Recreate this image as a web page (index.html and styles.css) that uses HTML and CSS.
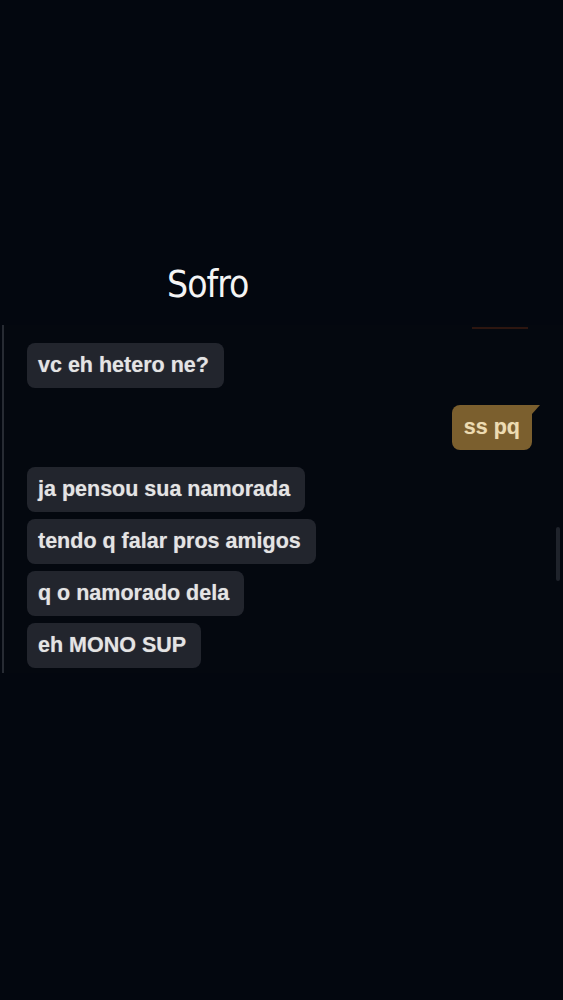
FILE: index.html
```html
<!DOCTYPE html>
<html lang="pt">
<head>
  <meta charset="UTF-8">
  <meta name="viewport" content="width=device-width, initial-scale=1.0">
  <title>Sofro</title>
  <link rel="stylesheet" href="styles.css">
</head>
<body>
  <div class="story">
    <div class="caption">Sofro</div>

    <div class="shot">
      <div class="shot_top"><span class="top_line"></span></div>

      <div class="group">
        <div class="msg in"><span class="bubble">vc eh hetero ne?</span></div>
      </div>

      <div class="group">
        <div class="msg out"><span class="bubble">ss pq</span></div>
      </div>

      <div class="group">
        <div class="msg in"><span class="bubble">ja pensou sua namorada</span></div>
        <div class="msg in"><span class="bubble">tendo q falar pros amigos</span></div>
        <div class="msg in"><span class="bubble">q o namorado dela</span></div>
        <div class="msg in"><span class="bubble">eh MONO SUP</span></div>
      </div>

      <span class="scroll"></span>
    </div>
  </div>
</body>
</html>
```

FILE: styles.css
```css
body {
  margin: 0;
  background: #03070f;
  min-height: 1000px;
}

.story {
  width: 563px;
  height: 1000px;
  overflow: hidden;
}

.caption {
  margin-top: 265px;
  padding-left: 167px;
  height: 40px;
  line-height: 40px;
  font-family: 'DejaVu Sans Condensed', 'DejaVu Sans', sans-serif;
  font-stretch: condensed;
  font-size: 37px;
  font-weight: 400;
  letter-spacing: -1px;
  color: #f4f4f4;
}

.shot {
  position: relative;
  margin-top: 20px;
  margin-left: 2px;
  border-left: 2px solid #272b33;
  background: #04080f;
  padding: 2px 23px 5px 23px;
  display: flex;
  flex-direction: column;
  gap: 17px;
  font-family: 'Liberation Sans', Arial, sans-serif;
}

.shot_top {
  display: flex;
  justify-content: flex-end;
  padding-right: 12px;
  margin-bottom: -3px;
}
.top_line {
  width: 56px;
  height: 2px;
  background: #2d1610;
}

.group {
  display: flex;
  flex-direction: column;
  gap: 7px;
}

.msg {display: flex;}
.msg.out {justify-content: flex-end; padding-right: 8px;}

.bubble {
  position: relative;
  height: 45px;
  box-sizing: border-box;
  padding: 10px 15px 10px 11px;
  line-height: 25px;
  font-size: 21.5px;
  font-weight: 700;
  border-radius: 8px;
  background: #22252d;
  color: #e4e4e4;
  text-shadow: 0 0 1px rgba(228, 228, 228, .5);
}

.msg.out .bubble {
  padding: 10px 12px;
  background: #7b5f2e;
  color: #eddcb2;
  border-top-right-radius: 0;
  text-shadow: 0 0 1px rgba(237, 220, 178, .4);
}
.msg.out .bubble::after {
  content: '';
  position: absolute;
  top: 0;
  right: -8px;
  border-top: 9px solid #7b5f2e;
  border-right: 8px solid transparent;
}

.scroll {
  position: absolute;
  top: 202px;
  right: 3px;
  width: 4px;
  height: 54px;
  border-radius: 2px;
  background: #1f232b;
}
```
